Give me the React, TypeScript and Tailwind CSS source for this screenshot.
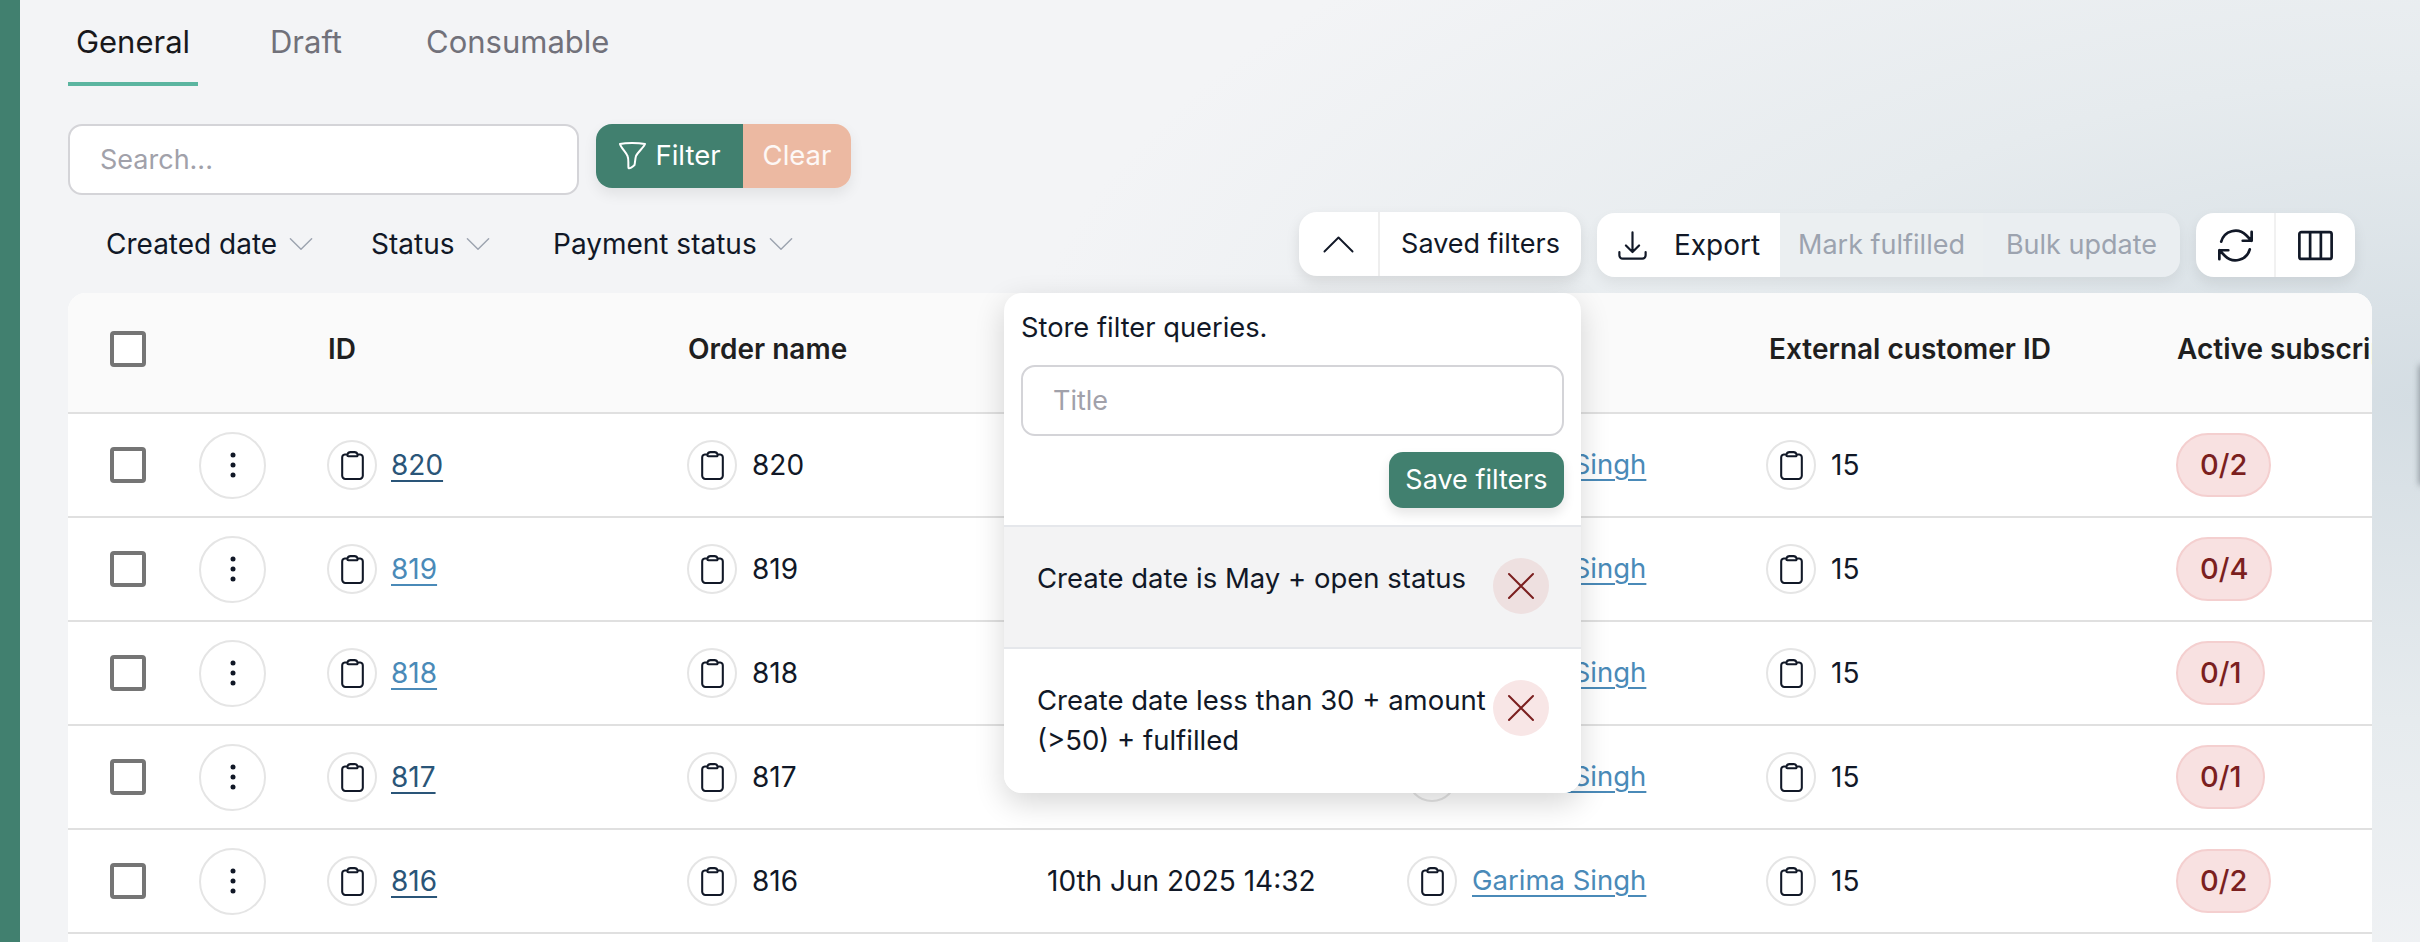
import {
  HiOutlineArrowDownTray,
  HiOutlineArrowPath,
  HiOutlineChevronDown,
  HiOutlineChevronUp,
  HiOutlineClipboard,
  HiOutlineViewColumns,
  HiOutlineXMark,
} from "react-icons/hi2";

const cols =
  "grid grid-cols-[131px_128px_360px_360px_360px_359px_410px_400px] items-center";

const rows = [
  { id: "820", subs: "0/2", visited: true },
  { id: "819", subs: "0/4", visited: false },
  { id: "818", subs: "0/1", visited: false },
  { id: "817", subs: "0/1", visited: true },
  { id: "816", subs: "0/2", visited: true },
];

function Copy() {
  return (
    <span className="w-[50px] h-[50px] shrink-0 rounded-full border-2 border-[#e5e5e5] flex items-center justify-center text-[#111827]">
      <HiOutlineClipboard size={33} />
    </span>
  );
}

function Check() {
  return <span className="block w-[36px] h-[36px] rounded-[4px] border-[4px] border-[#757575] bg-white" />;
}

function FilterPick({ label, className }: { label: string; className?: string }) {
  return (
    <div className={`flex items-center gap-[7px] text-[28px] text-[#111827] ${className ?? ""}`}>
      {label}
      <HiOutlineChevronDown size={34} className="text-[#9ca3af]" strokeWidth={1} />
    </div>
  );
}

function SavedItem({ text, active }: { text: React.ReactNode; active?: boolean }) {
  return (
    <div
      className={`flex items-start justify-between pl-[33px] pr-[32px] pt-[31px] pb-[33px] border-t-2 border-[#e5e7eb] ${
        active ? "bg-[#f3f3f4]" : "bg-white"
      }`}
    >
      <p className="text-[27.5px] leading-[40px] text-[#111827] whitespace-nowrap">{text}</p>
      <span
        className={`w-[56px] h-[56px] shrink-0 rounded-full flex items-center justify-center text-[#7b1f1f] ${
          active ? "bg-[#eee0e0]" : "bg-[#f8e6e6]"
        }`}
      >
        <HiOutlineXMark size={48} strokeWidth={1} />
      </span>
    </div>
  );
}

export default function App() {
  return (
    <div className="relative flex h-[942px] w-[2420px] overflow-hidden font-['Inter',sans-serif] bg-[radial-gradient(ellipse_1400px_640px_at_2420px_400px,#d4dde3_0%,#e6ebee_50%,#f3f4f6_100%)]">
      <div className="w-[20px] shrink-0 bg-[#41806f]" />
      <div className="relative flex-1 pl-[48px] pr-[48px]">
        {/* tabs */}
        <div className="flex h-[86px] text-[31px] text-[#71717a]">
          <div className="w-[130px] h-[86px] pt-[19px] text-center text-[#18181b] border-b-4 border-[#5bb5a0]">General</div>
          <div className="ml-[72px] pt-[19px]">Draft</div>
          <div className="ml-[84px] pt-[19px]">Consumable</div>
        </div>

        {/* search */}
        <div className="flex items-start gap-[17px] mt-[38px]">
          <input
            placeholder="Search..."
            className="w-[511px] h-[71px] rounded-[14px] border-2 border-[#d4d4d8] bg-white pl-[30px] text-[27px] outline-none placeholder:text-[#a1a1aa]"
          />
          <div className="flex h-[64px] rounded-[16px] shadow-[0_6px_14px_rgba(0,0,0,0.08)] overflow-hidden text-[27.5px]">
            <button className="w-[147px] bg-[#41806f] text-white flex items-center justify-center gap-[9px]">
              <svg width="28" height="30" viewBox="0 0 28 30" fill="none" stroke="currentColor" strokeWidth="2" strokeLinejoin="round">
                <path d="M2 3c6-1.500 18-1.500 25 0-1 3-7 8-9 12-1 3-1 8-1.500 9-2 2-5 4-6 3-.5-4 .5-9-1-12C8 11 3 7 2 3z" />
              </svg>
              Filter
            </button>
            <button className="w-[108px] bg-[#ecb9a2] text-white/90">Clear</button>
          </div>
        </div>

        {/* filters and actions */}
        <div className="flex items-start justify-between mt-[17px] pr-[17px]">
          <div className="flex items-center h-[64px] pl-[38px]">
            <FilterPick label="Created date" className="w-[265px]" />
            <FilterPick label="Status" className="w-[182px]" />
            <FilterPick label="Payment status" />
          </div>
          <div className="flex items-start gap-[16px] text-[27px]">
            <div className="flex h-[64px] w-[282px] rounded-[18px] bg-white shadow-[0_6px_14px_rgba(0,0,0,0.1)] text-[#111827]">
              <span className="w-[81px] flex items-center justify-center border-r-2 border-[#eeeeee]">
                <HiOutlineChevronUp size={45} strokeWidth={1} />
              </span>
              <span className="flex-1 flex items-center justify-center">Saved filters</span>
            </div>
            <div className="flex h-[64px] w-[583px] mt-px rounded-[18px] shadow-[0_6px_14px_rgba(0,0,0,0.06)] overflow-hidden">
              <span className="w-[183px] bg-white flex items-center pl-[18px] gap-[24px] text-[28px] text-[#111827]">
                <HiOutlineArrowDownTray size={35} />
                Export
              </span>
              <span className="w-[203px] bg-[#ebeff1] text-[#9ca3af] flex items-center justify-center">Mark fulfilled</span>
              <span className="flex-1 bg-[#eaeef1] text-[#9ca3af] flex items-center justify-center">Bulk update</span>
            </div>
            <div className="flex h-[64px] w-[159px] mt-px rounded-[18px] bg-white shadow-[0_6px_14px_rgba(0,0,0,0.08)] text-[#111827]">
              <span className="w-[80px] flex items-center justify-center border-r-2 border-[#f1f1f1]">
                <HiOutlineArrowPath size={43} />
              </span>
              <span className="flex-1 flex items-center justify-center">
                <HiOutlineViewColumns size={43} />
              </span>
            </div>
          </div>
        </div>

        {/* table */}
        <div className="mt-[16px] w-[2304px] h-[700px] rounded-t-[18px] overflow-hidden bg-white">
          <div className={`${cols} h-[121px] pb-[8px] bg-[#fafafa] border-b-2 border-[#e0e0e0] text-[28px] font-semibold text-[#1f1f1f]`}>
            <div className="pl-[42px]"><Check /></div>
            <div />
            <div className="pl-px">ID</div>
            <div className="pl-px">Order name</div>
            <div>Order date</div>
            <div>Customer</div>
            <div className="pl-[3px] whitespace-nowrap">External customer ID</div>
            <div className="pl-px whitespace-nowrap">Active subscriptions</div>
          </div>
          {rows.map((r) => (
            <div key={r.id} className={`${cols} h-[104px] border-b-2 border-[#e0e0e0] text-[28px] text-[#111827]`}>
              <div className="pl-[42px]"><Check /></div>
              <div>
                <span className="w-[67px] h-[67px] rounded-full border-2 border-[#e5e5e5] flex items-center justify-center">
                  <svg width="6" height="26" viewBox="0 0 6 26" fill="#111827">
                    <circle cx="3" cy="3" r="2.500" />
                    <circle cx="3" cy="13" r="2.500" />
                    <circle cx="3" cy="23" r="2.500" />
                  </svg>
                </span>
              </div>
              <div className="flex items-center gap-[14px]">
                <Copy />
                <a className={`underline underline-offset-[5px] ${r.visited ? "text-[#2a5578]" : "text-[#4a8ab8]"}`}>{r.id}</a>
              </div>
              <div className="flex items-center gap-[15px]">
                <Copy />
                {r.id}
              </div>
              <div>10th Jun 2025 14:32</div>
              <div className="flex items-center gap-[15px]">
                <Copy />
                <a className="underline underline-offset-[5px] text-[27.5px] text-[#4a8ab8]">Garima Singh</a>
              </div>
              <div className="flex items-center gap-[15px]">
                <Copy />
                15
              </div>
              <div>
                <span className="inline-flex items-center h-[64px] px-[22px] rounded-full bg-[#f8e1e1] border-2 border-[#f4cfcf] text-[29px] text-[#7b1f1f] font-medium">
                  {r.subs}
                </span>
              </div>
            </div>
          ))}
        </div>

        {/* saved filters popover */}
        <div className="absolute left-[984px] top-[293px] w-[577px] rounded-[18px] bg-white shadow-[0_10px_30px_rgba(0,0,0,0.16)] overflow-hidden">
          <div className="px-[17px] pt-[20px]">
            <p className="text-[27.3px] leading-[30px] text-[#111827]">Store filter queries.</p>
            <input
              placeholder="Title"
              className="mt-[22px] w-full h-[71px] rounded-[14px] border-2 border-[#d4d4d8] pl-[30px] text-[27px] outline-none placeholder:text-[#a1a1aa]"
            />
            <div className="flex justify-end mt-[16px] mb-[17px]">
              <button className="w-[175px] h-[56px] rounded-[14px] bg-[#41806f] text-white text-[27px] shadow-[0_6px_12px_rgba(0,0,0,0.1)]">
                Save filters
              </button>
            </div>
          </div>
          <SavedItem active text="Create date is May + open status" />
          <SavedItem text={<>Create date less than 30 + amount<br />(&gt;50) + fulfilled</>} />
        </div>

        {/* edge of the drawer behind */}
        <div className="absolute right-[-6px] top-[365px] h-[120px] w-[7px] bg-[#8b949b] blur-[3px]" />
      </div>
    </div>
  );
}
